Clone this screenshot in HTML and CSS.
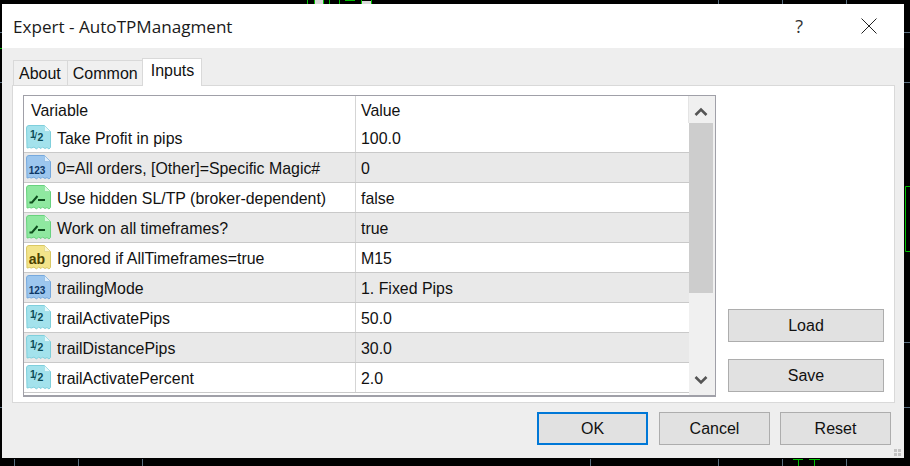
FILE: index.html
```html
<!DOCTYPE html>
<html lang="en">
<head>
<meta charset="utf-8">
<title>Expert - AutoTPManagment</title>
<link rel="stylesheet" href="styles.css">
</head>
<body>
<svg class="chart" width="910" height="466" viewBox="0 0 910 466" aria-hidden="true">
  <g stroke="#5a6f80" stroke-width="1">
    <path d="M14.500 459v7M78.500 459v7M142.500 459v7M590.500 459v7M718.500 459v7M782.500 459v7M846.500 459v7"/>
    <path d="M718.500 0v4M782.500 0v4M846.500 0v4"/>
    <path d="M904 32.500h6M904 82.500h6M904 342.500h6M904 407.500h6M0 32.500h2M0 82.500h2M0 407.500h2"/>
  </g>
  <g stroke="#00c000" stroke-width="1" fill="none">
    <path d="M793 459.500h10M798.500 459v7M809 459.500h11M814.500 459v7"/>
    <path d="M910 186.500h-4.500v65h4.500M0 48.500h2"/>
    <path d="M307.500 0v4M329.500 0v4M339.500 0v4M345 .5h10"/>
    <path d="M314.500 0v4M323.500 0v4M361.500 0v4M371.500 0v4" />
  </g>
  <path d="M315 0h8v4h-8zM362 1h9v3h-9z" fill="#d8d8d8"/>
</svg>
<main class="window">
  <header class="titlebar">
    <h1 class="title">Expert - AutoTPManagment</h1>
    <span class="help">?</span>
    <svg class="close" width="16" height="16" viewBox="0 0 16 16"><path d="M.5.5l15 15M15.500 .5l-15 15" stroke="#222" fill="none"/></svg>
  </header>
  <div class="body">
    <nav class="tabs">
      <span class="tab about">About</span>
      <span class="tab">Common</span>
      <span class="tab active">Inputs</span>
    </nav>
    <section class="panel">
      <div class="list">
        <div class="table">
          <div class="row head"><span class="cell var">Variable</span><span class="cell val">Value</span></div>
          <div class="row"><span class="cell var"><svg class="ico"><use href="#i-frac"/></svg>Take Profit in pips</span><span class="cell val">100.0</span></div>
          <div class="row alt"><span class="cell var"><svg class="ico"><use href="#i-int"/></svg>0=All orders, [Other]=Specific Magic#</span><span class="cell val">0</span></div>
          <div class="row"><span class="cell var"><svg class="ico"><use href="#i-bool"/></svg>Use hidden SL/TP (broker-dependent)</span><span class="cell val">false</span></div>
          <div class="row alt"><span class="cell var"><svg class="ico"><use href="#i-bool"/></svg>Work on all timeframes?</span><span class="cell val">true</span></div>
          <div class="row"><span class="cell var"><svg class="ico"><use href="#i-str"/></svg>Ignored if AllTimeframes=true</span><span class="cell val">M15</span></div>
          <div class="row alt"><span class="cell var"><svg class="ico"><use href="#i-int"/></svg>trailingMode</span><span class="cell val">1. Fixed Pips</span></div>
          <div class="row"><span class="cell var"><svg class="ico"><use href="#i-frac"/></svg>trailActivatePips</span><span class="cell val">50.0</span></div>
          <div class="row alt"><span class="cell var"><svg class="ico"><use href="#i-frac"/></svg>trailDistancePips</span><span class="cell val">30.0</span></div>
          <div class="row"><span class="cell var"><svg class="ico"><use href="#i-frac"/></svg>trailActivatePercent</span><span class="cell val">2.0</span></div>
        </div>
        <div class="scrollbar">
          <svg class="arrow" width="26" height="27" viewBox="0 0 26 27"><path d="M6.500 19l5.500-5.500 5.500 5.500" stroke="#555" stroke-width="2.600" fill="none"/></svg>
          <div class="track"><div class="thumb"></div></div>
          <svg class="arrow" width="26" height="27" viewBox="0 0 26 27"><path d="M6.500 9l5.500 5.500 5.500-5.500" stroke="#555" stroke-width="2.600" fill="none"/></svg>
        </div>
      </div>
      <div class="side">
        <button class="btn wide">Load</button>
        <button class="btn wide">Save</button>
      </div>
    </section>
    <footer class="actions">
      <button class="btn main">OK</button>
      <button class="btn">Cancel</button>
      <button class="btn">Reset</button>
    </footer>
    <svg class="grip" width="8" height="8" viewBox="0 0 8 8"><path d="M0 0h3v3H0zM4 0h3v3H4zM0 4h3v3H0zM4 4h3v3H4z" fill="#c4c4c4"/></svg>
  </div>
</main>
<svg class="defs" width="0" height="0" aria-hidden="true">
  <defs>
    <symbol id="i-frac" viewBox="0 0 25 25">
      <path d="M.5 3a2.500 2.500 0 0 1 2.500-2.500h15.500l6 6v16l-1.500 1.500-2-1.500-2 1-2.500-1.500-1.500 1.500-2.500-1.500-2 2-2.500-2-2.500 1-2-.5-2.500.5z" fill="#a3e2ec" stroke="#7fcfdc"/>
      <path d="M18.500 .5v6h6z" fill="#e6f8fb" stroke="#9adbe6" stroke-width=".7"/>
      <text x="4" y="12.500" class="gl gl-d">1</text>
      <text x="8" y="15" class="gl gl-d gl-slash">/</text>
      <text x="11.500" y="16" class="gl gl-d">2</text>
    </symbol>
    <symbol id="i-int" viewBox="0 0 25 25">
      <path d="M.5 3a2.500 2.500 0 0 1 2.500-2.500h15.500l6 6v16l-1.500 1.500-2-1.500-2 1-2.500-1.500-1.500 1.500-2.500-1.500-2 2-2.500-2-2.500 1-2-.5-2.500.5z" fill="#9cc6ee" stroke="#76a9dd"/>
      <path d="M18.500 .5v6h6z" fill="#deedfb" stroke="#8db8e3" stroke-width=".7"/>
      <text x="11" y="18.500" class="gl gl-n" text-anchor="middle">123</text>
    </symbol>
    <symbol id="i-bool" viewBox="0 0 25 25">
      <path d="M.5 3a2.500 2.500 0 0 1 2.500-2.500h15.500l6 6v16l-1.500 1.500-2-1.500-2 1-2.500-1.500-1.500 1.500-2.500-1.500-2 2-2.500-2-2.500 1-2-.5-2.500.5z" fill="#8fe8a0" stroke="#68d27e"/>
      <path d="M18.500 .5v6h6z" fill="#dcf9e2" stroke="#86de98" stroke-width=".7"/>
      <path d="M3.500 17.500h2.500l5.500-6.500M12 15h7" stroke="#0d4d1d" stroke-width="2" fill="none"/>
    </symbol>
    <symbol id="i-str" viewBox="0 0 25 25">
      <path d="M.5 3a2.500 2.500 0 0 1 2.500-2.500h15.500l6 6v16l-1.500 1.500-2-1.500-2 1-2.500-1.500-1.500 1.500-2.500-1.500-2 2-2.500-2-2.500 1-2-.5-2.500.5z" fill="#f3e48a" stroke="#d9c864"/>
      <path d="M18.500 .5v6h6z" fill="#fbf5cd" stroke="#e0d284" stroke-width=".7"/>
      <text x="11" y="18.500" class="gl gl-s" text-anchor="middle">ab</text>
    </symbol>
  </defs>
</svg>
</body>
</html>
```
FILE: styles.css
```css
* { box-sizing: border-box; }
html, body { margin: 0; padding: 0; }
body {
  width: 910px;
  height: 466px;
  overflow: hidden;
  background: #000;
  padding: 4px 6px 8px 2px;
  font-family: "Liberation Sans", Arial, sans-serif;
  font-size: 16px;
  color: #111;
  position: relative;
}
.chart { position: absolute; left: 0; top: 0; }
.defs { position: absolute; }
.window {
  position: relative;
  width: 902px;
  height: 454px;
  display: flex;
  flex-direction: column;
  background: #eee;
}
.titlebar {
  height: 44px;
  flex: none;
  background: #fff;
  display: flex;
  align-items: center;
  padding-left: 11px;
}
.title {
  margin: 0;
  flex: 1;
  font-family: "Open Sans", sans-serif;
  font-weight: 400;
  font-size: 17.100px;
  color: #1a1a1a;
}
.help {
  font-family: "Open Sans", sans-serif;
  font-size: 18px;
  color: #333;
  margin-right: 58px;
}
.close { margin-right: 27px; }
.body {
  position: relative;
  flex: 1;
  padding: 12px 9px 0 10px;
  display: flex;
  flex-direction: column;
}
.tabs {
  display: flex;
  height: 25px;
  padding-left: 1px;
  align-items: flex-end;
  position: relative;
  z-index: 1;
}
.tab {
  height: 25px;
  padding: 3px 4px 0 5px;
  background: #f0f0f0;
  border: 1px solid #d9d9d9;
  border-bottom: 0;
  line-height: 19px;
  margin-right: -1px;
}
.tab.about { padding-right: 6px; }
.tab.active {
  height: 28px;
  margin-bottom: -1px;
  padding: 2px 7px 0 8px;
  background: #fff;
  border-color: #d9d9d9;
}
.panel {
  height: 318px;
  flex: none;
  background: #fff;
  border: 1px solid #d9d9d9;
  display: flex;
  padding: 9px 10px 6px 10px;
}
.list {
  width: 693px;
  height: 302px;
  flex: none;
  display: flex;
  border: 1px solid #a0a0a8;
  border-bottom-width: 2px;
}
.table { width: 665px; flex: none; font-size: 15.900px; }
.row {
  display: flex;
  height: 30px;
  border-bottom: 1px solid #c9c9c9;
  background: #fff;
  align-items: center;
}
.row.alt { background: #e9e9e9; }
.row.head { height: 27px; border-bottom: 0; }
.row.head .val { border-right: 1px solid #e4e4e4; }
.cell { display: flex; align-items: center; height: 100%; line-height: 1; padding-top: 2px; }
.var { width: 332px; border-right: 1px solid #d5d5d5; padding-left: 7px; flex: none; white-space: nowrap; }
.row:not(.head) .var { padding-left: 2px; }
.val { padding-left: 5px; flex: 1; }
.ico { width: 25px; height: 25px; margin-right: 6px; margin-top: -2px; flex: none; }
.gl { font-family: "Liberation Sans", sans-serif; font-weight: 700; }
.gl-d { font-size: 10.500px; fill: #0c4c58; }
.gl-slash { font-size: 11px; font-weight: 400; }
.gl-n { font-size: 10px; fill: #0d3766; }
.gl-s { font-size: 14px; fill: #4b4100; }
.scrollbar {
  width: 26px;
  flex: none;
  background: #f0f0f0;
  display: flex;
  flex-direction: column;
}
.arrow { flex: none; }
.track { flex: 1; }
.thumb { height: 170px; width: 24px; background: #cdcdcd; }
.side {
  flex: 1;
  display: flex;
  flex-direction: column;
  gap: 17px;
  padding: 214px 0 0 12px;
}
.btn {
  font: inherit;
  color: #111;
  background: #e1e1e1;
  border: 1px solid #adadad;
  width: 111px;
  height: 33px;
  padding: 0;
  flex: none;
}
.btn.wide { width: 156px; }
.btn.main { border: 2px solid #0078d7; margin-right: 1px; }
.actions {
  display: flex;
  justify-content: flex-end;
  gap: 10px;
  padding-top: 9px;
  padding-right: 4px;
}
.grip { position: absolute; right: 2px; bottom: 1px; }
```
